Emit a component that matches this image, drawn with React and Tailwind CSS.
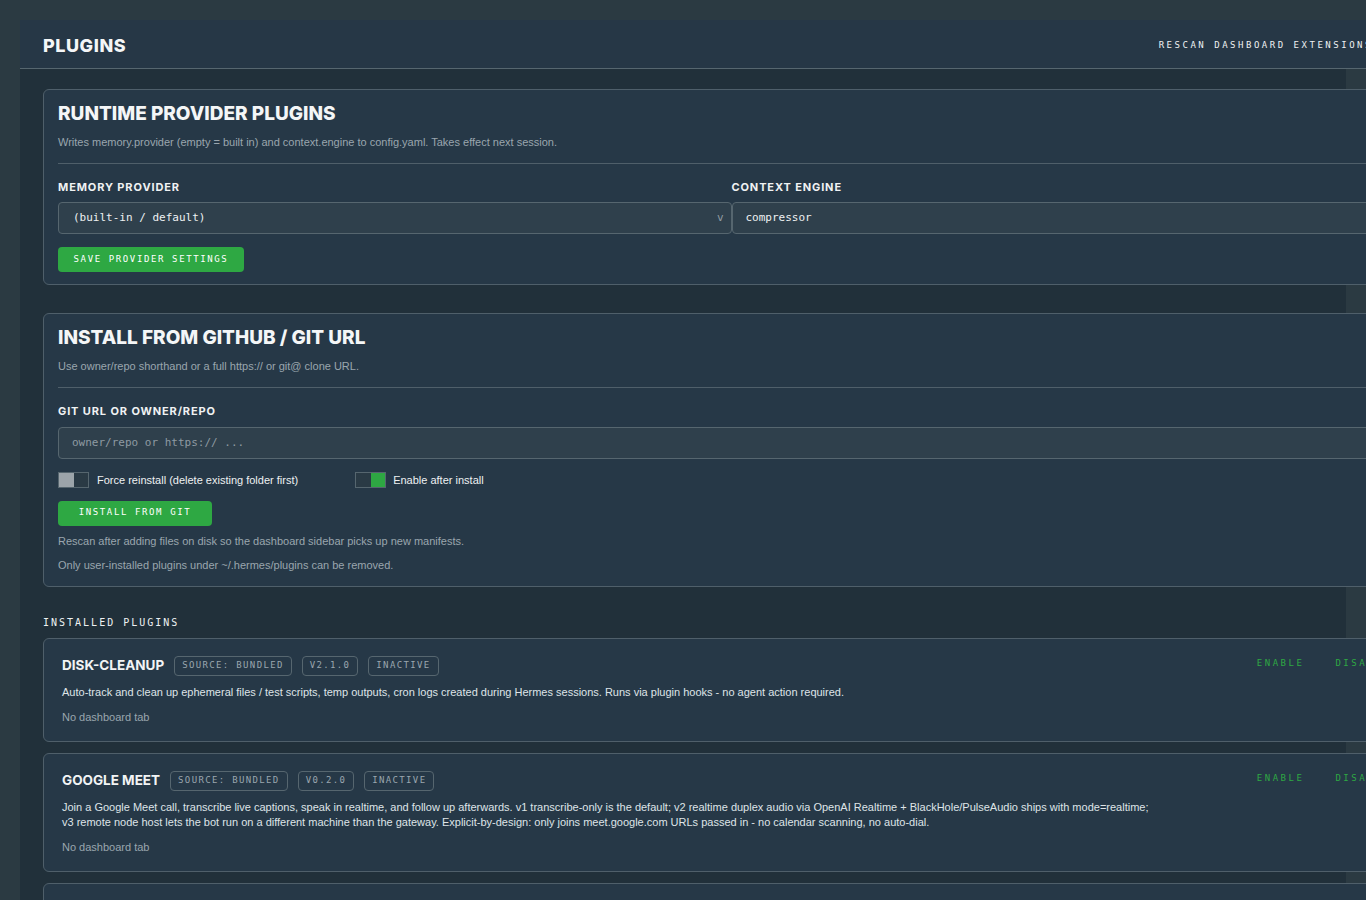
import React from 'react';

const sans = "font-['Inter',sans-serif]";
const body = "font-['Liberation_Sans',Arial,sans-serif]";
const mono = "font-['DejaVu_Sans_Mono',monospace]";

const Badge = ({ children, tone }) => (
  <span
    className={`${mono} inline-flex h-[20px] items-center rounded-[4px] border px-[7px] text-[9px] uppercase tracking-[0.15em] ${
      tone === 'red'
        ? 'border-[#e0525a] bg-[#e0525a] text-white'
        : 'border-[#56666f] text-[#9aa6ae]'
    }`}
  >
    {children}
  </span>
);

const Toggle = ({ on }) => (
  <span className="flex h-[16px] w-[31px] border border-[#56666f]">
    {on ? (
      <>
        <span className="flex-1 bg-[#2a3a45]" />
        <span className="flex-1 bg-[#2ea843]" />
      </>
    ) : (
      <>
        <span className="flex-1 bg-[#9ca4aa]" />
        <span className="flex-1 bg-[#2a3a45]" />
      </>
    )}
  </span>
);

const GreenButton = ({ children, width }) => (
  <button
    className={`${mono} flex h-[25px] items-center justify-center rounded-[4px] bg-[#2ea843] text-[9px] uppercase tracking-[0.18em] text-white ${width}`}
  >
    {children}
  </button>
);

const plugins = [
  {
    name: 'DISK-CLEANUP',
    badges: ['Source: bundled', 'v2.1.0', 'Inactive'],
    desc: [
      'Auto-track and clean up ephemeral files / test scripts, temp outputs, cron logs created during Hermes sessions. Runs via plugin hooks - no agent action required.',
    ],
  },
  {
    name: 'GOOGLE MEET',
    badges: ['Source: bundled', 'v0.2.0', 'Inactive'],
    desc: [
      'Join a Google Meet call, transcribe live captions, speak in realtime, and follow up afterwards. v1 transcribe-only is the default; v2 realtime duplex audio via OpenAI Realtime + BlackHole/PulseAudio ships with mode=realtime;',
      'v3 remote node host lets the bot run on a different machine than the gateway. Explicit-by-design: only joins meet.google.com URLs passed in - no calendar scanning, no auto-dial.',
    ],
  },
  {
    name: 'SPOTIFY',
    badges: ['Source: github', 'v0.1.0', 'Enabled', 'Missing deps'],
    gap: 'gap-[15px]',
    desc: ['Control Spotify playback from chat.'],
  },
];

const PluginCard = ({ plugin }) => (
  <div className="w-[1377px] rounded-[6px] border border-[#4f5f6a] bg-[#263847] pb-[16px] pl-[18px] pr-[18px] pt-[17px]">
    <div className="flex items-start">
      <div className={`flex h-[20px] items-center ${plugin.gap || 'gap-[10px]'}`}>
        <span className={`${sans} text-[13.5px] font-bold text-[#f2f4f5]`}>{plugin.name}</span>
        {plugin.badges.map((b, i) => (
          <Badge key={b} tone={i === 3 ? 'red' : undefined}>
            {b}
          </Badge>
        ))}
      </div>
      <div className={`${mono} ml-auto flex gap-[31px] pr-[10px] text-[9px] leading-[14px] tracking-[0.28em] text-[#2ea843]`}>
        <span>ENABLE</span>
        <span>DISABLE</span>
      </div>
    </div>
    <div className={`${body} mt-[9px] text-[11px] leading-[15px] text-[#dfe4e7]`}>
      {plugin.desc.map((d) => (
        <p key={d}>{d}</p>
      ))}
    </div>
    <p className={`${body} mt-[10px] text-[11px] leading-[15px] text-[#9aa6ae]`}>No dashboard tab</p>
  </div>
);

export default function App() {
  return (
    <div className="min-h-screen overflow-hidden bg-[#2b3a42] pl-[20px] pt-[20px]">
      <div className="w-[1371px]">
        {/* header */}
        <header className="flex h-[49px] items-center justify-between border-b border-[#56666f] bg-[#263746] pl-[23px] pr-[18px] pt-[3px]">
          <h1 className={`${sans} text-[18px] font-extrabold tracking-[0.03em] text-[#f4f6f7]`}>PLUGINS</h1>
          <button className={`${mono} text-[9px] tracking-[0.28em] text-[#eef1f2]`}>RESCAN DASHBOARD EXTENSIONS</button>
        </header>

        <main className="w-[1326px] bg-[#21303a] px-[23px] pb-[40px] pt-[20px]">
          {/* runtime providers */}
          <section className="w-[1377px] rounded-[6px] border border-[#4f5f6a] bg-[#263847] px-[14px] pb-[12px] pt-[11px]">
            <div className="border-b border-[#4f5f6a] pb-[13px]">
              <h2 className={`${sans} text-[19px] font-extrabold leading-[26px] text-[#f4f6f7]`}>
                RUNTIME PROVIDER PLUGINS
              </h2>
              <p className={`${body} mt-[8px] text-[11px] leading-[15px] text-[#9aa6ae]`}>
                Writes memory.provider (empty = built in) and context.engine to config.yaml. Takes effect next session.
              </p>
            </div>
            <div className="mt-[16px] grid grid-cols-2">
              <div>
                <label className={`${sans} block text-[11px] font-bold leading-[14px] tracking-[0.08em] text-[#f0f2f3]`}>
                  MEMORY PROVIDER
                </label>
                <div className={`${mono} mt-[8px] flex h-[32px] items-center justify-between rounded-[4px] border border-[#56666f] bg-[#2f404c] pl-[14px] pr-[7px] pt-[1px] text-[11px] text-[#eef1f2]`}>
                  <span>(built-in / default)</span>
                  <span className="text-[#8e9aa2]">v</span>
                </div>
              </div>
              <div>
                <label className={`${sans} block text-[11px] font-bold leading-[14px] tracking-[0.08em] text-[#f0f2f3]`}>
                  CONTEXT ENGINE
                </label>
                <div className={`${mono} mt-[8px] flex h-[32px] items-center rounded-[4px] border border-[#56666f] bg-[#2f404c] pl-[13px] pt-[1px] text-[11px] text-[#eef1f2]`}>
                  compressor
                </div>
              </div>
            </div>
            <div className="mt-[13px]">
              <GreenButton width="w-[186px]">SAVE PROVIDER SETTINGS</GreenButton>
            </div>
          </section>

          {/* install from git */}
          <section className="mt-[28px] w-[1377px] rounded-[6px] border border-[#4f5f6a] bg-[#263847] px-[14px] pb-[13px] pt-[11px]">
            <div className="border-b border-[#4f5f6a] pb-[13px]">
              <h2 className={`${sans} text-[19px] font-extrabold leading-[26px] text-[#f4f6f7]`}>
                INSTALL FROM GITHUB / GIT URL
              </h2>
              <p className={`${body} mt-[8px] text-[11px] leading-[15px] text-[#9aa6ae]`}>
                Use owner/repo shorthand or a full https:// or git@ clone URL.
              </p>
            </div>
            <label className={`${sans} mt-[16px] block text-[11px] font-bold leading-[14px] tracking-[0.08em] text-[#f0f2f3]`}>
              GIT URL OR OWNER/REPO
            </label>
            <div className={`${mono} mt-[9px] flex h-[32px] items-center rounded-[4px] border border-[#56666f] bg-[#2f404c] pl-[13px] pt-[1px] text-[11px] text-[#8e9aa2]`}>
              owner/repo or https:// ...
            </div>
            <div className={`${body} mt-[13px] flex items-center text-[11px] text-[#eef1f2]`}>
              <Toggle />
              <span className="ml-[8px]">Force reinstall (delete existing folder first)</span>
              <span className="ml-[57px]">
                <Toggle on />
              </span>
              <span className="ml-[7px]">Enable after install</span>
            </div>
            <div className="mt-[12px]">
              <GreenButton width="w-[154px]">INSTALL FROM GIT</GreenButton>
            </div>
            <p className={`${body} mt-[8px] text-[11px] leading-[15px] text-[#9aa6ae]`}>
              Rescan after adding files on disk so the dashboard sidebar picks up new manifests.
            </p>
            <p className={`${body} mt-[9px] text-[11px] leading-[15px] text-[#9aa6ae]`}>
              Only user-installed plugins under ~/.hermes/plugins can be removed.
            </p>
          </section>

          {/* installed */}
          <h3 className={`${mono} mt-[29px] text-[10px] leading-[14px] tracking-[0.2em] text-[#eef1f2]`}>INSTALLED PLUGINS</h3>
          <div className="mt-[8px] flex flex-col gap-[11px]">
            {plugins.map((p) => (
              <PluginCard key={p.name} plugin={p} />
            ))}
          </div>
        </main>
      </div>
    </div>
  );
}
